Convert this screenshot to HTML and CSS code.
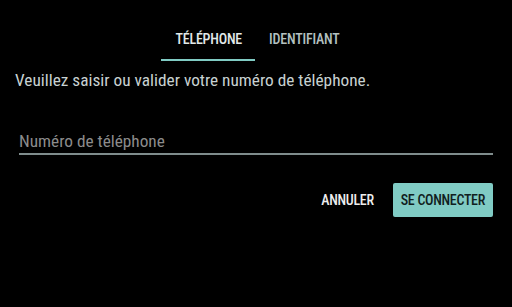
FILE: index.html
```html
<!DOCTYPE html>
<html lang="fr">
<head>
  <meta charset="UTF-8">
  <meta name="viewport" content="width=device-width, initial-scale=1.0">
  <title>Connexion</title>
  <link rel="stylesheet" href="styles.css">
</head>
<body>
<div class="dialog">
  <div class="tabs">
    <div class="tab active">TÉLÉPHONE</div>
    <div class="tab">IDENTIFIANT</div>
  </div>
  <p class="hint">Veuillez saisir ou valider votre numéro de téléphone.</p>
  <div class="field">
    <input class="phone" type="tel" placeholder="Numéro de téléphone">
  </div>
  <div class="actions">
    <button class="btn flat">ANNULER</button>
    <button class="btn raised">SE CONNECTER</button>
  </div>
</div>
</body>
</html>
```

FILE: styles.css
```css
body, html {
  height: 100%;
  margin: 0;
  background: #000;
  font-family: "Roboto Condensed", Roboto, sans-serif;
}
.dialog {
  padding: 0 19px 0 15px;
}
.tabs {
  display: flex;
  justify-content: center;
  padding-top: 20px;
  margin-left: 6px;
}
.tab {
  padding: 11px 13px 12px 14px;
  font-size: 14px;
  font-weight: 500;
  letter-spacing: -0.2px;
  color: #b4c0c0;
  border-bottom: 2px solid transparent;
}
.tab.active {
  color: #e2eaea;
  border-bottom-color: #80cbc4;
}
.hint {
  margin: 9px 0 0;
  font-size: 17.3px;
  line-height: 20px;
  color: #c8d2d2;
}
.field {
  margin: 37px 0 0 4px;
  border-bottom: 2px solid #7f8c8c;
}
.phone {
  display: block;
  width: 100%;
  box-sizing: border-box;
  background: transparent;
  border: 0;
  outline: none;
  padding: 3px 0 1px;
  font-family: inherit;
  font-size: 17.3px;
  line-height: 22px;
  color: #ddd;
}
.phone::placeholder {
  color: #8c8c8c;
}
.actions {
  display: flex;
  justify-content: flex-end;
  align-items: center;
  gap: 11px;
  margin-top: 28px;
}
.btn {
  font-family: inherit;
  font-size: 14px;
  font-weight: 500;
  letter-spacing: -0.3px;
  border: 0;
  border-radius: 2px;
  height: 34px;
  padding: 0 8px;
}
.btn.flat {
  background: transparent;
  color: #eee;
}
.btn.raised {
  background: #80cbc4;
  color: #102020;
}
```
